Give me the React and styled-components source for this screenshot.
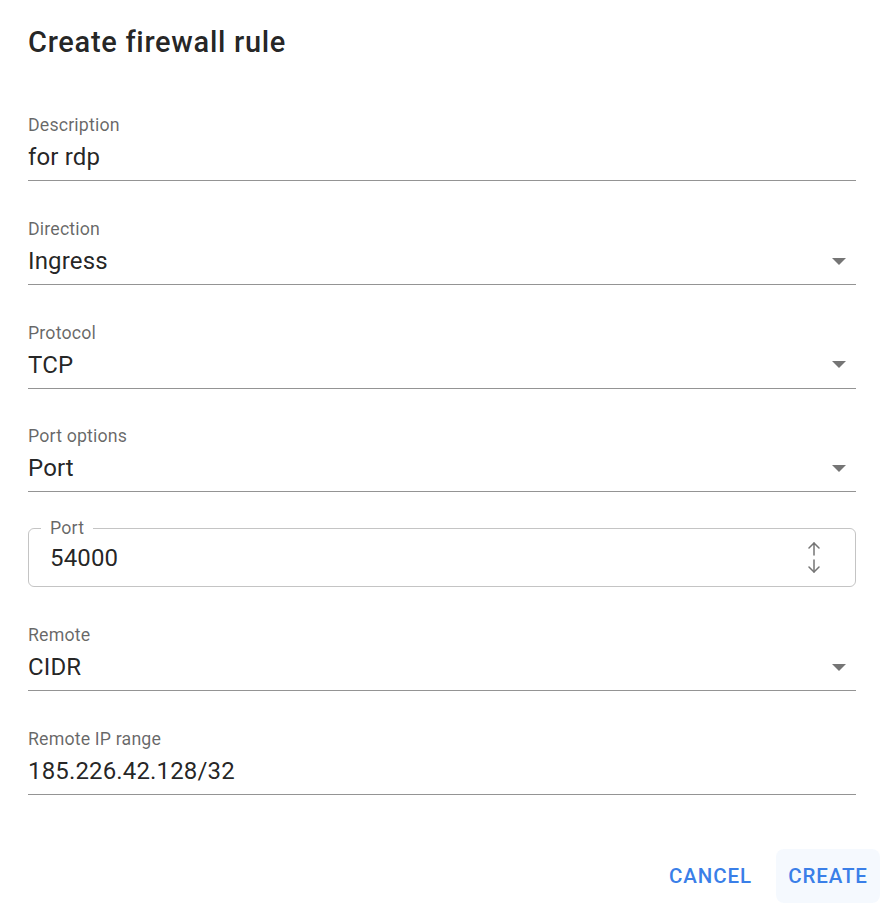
import styled, { createGlobalStyle } from "styled-components";

const Global = createGlobalStyle`
  body {
    margin: 0;
    background: #fff;
    font-family: Roboto, "Liberation Sans", sans-serif;
    color: rgba(0, 0, 0, 0.87);
  }
`;

const Dialog = styled.div`
  width: 880px;
  height: 910px;
  box-sizing: border-box;
  padding: 24px 0 0 28px;
  display: flex;
  flex-direction: column;
`;

const Title = styled.h2`
  margin: 0;
  font-size: 29px;
  font-weight: 500;
  line-height: 36px;
  letter-spacing: 0.7px;
`;

const Form = styled.div`
  width: 828px;
  display: flex;
  flex-direction: column;
  padding-top: 55px;
`;

const Field = styled.div`
  display: flex;
  flex-direction: column;
  margin-top: ${(p) => p.gap || 0}px;
  border-bottom: 1px solid rgba(0, 0, 0, 0.42);
  padding-bottom: 8px;
`;

const Label = styled.label`
  font-size: 17.8px;
  line-height: 20px;
  color: rgba(0, 0, 0, 0.6);
  letter-spacing: 0.15px;
`;

const ValueRow = styled.div`
  margin-top: 7px;
  height: 30px;
  display: flex;
  align-items: center;
  justify-content: space-between;
`;

const Value = styled.span`
  font-size: 24px;
  line-height: 30px;
  letter-spacing: 0.15px;
`;

const Caret = styled.span`
  width: 0;
  height: 0;
  margin-right: 10px;
  border-left: 7.5px solid transparent;
  border-right: 7.5px solid transparent;
  border-top: 7px solid rgba(0, 0, 0, 0.54);
`;

const Outlined = styled.div`
  position: relative;
  margin-top: 36px;
  height: 59px;
  box-sizing: border-box;
  border: 1px solid rgba(0, 0, 0, 0.23);
  border-radius: 6px;
  padding: 0 34px 0 21px;
  display: flex;
  align-items: center;
  justify-content: space-between;
`;

const Legend = styled.span`
  position: absolute;
  top: -11px;
  left: 12px;
  padding: 0 9px;
  background: #fff;
  font-size: 17.8px;
  line-height: 20px;
  color: rgba(0, 0, 0, 0.6);
  letter-spacing: 0.15px;
`;

const Spinner = styled.div`
  display: flex;
  flex-direction: column;
  gap: 3px;
  color: #757575;
`;

const Actions = styled.div`
  margin-top: auto;
  margin-bottom: 7px;
  display: flex;
  justify-content: flex-end;
  gap: 12px;
`;

const Button = styled.button`
  border: none;
  background: ${(p) => (p.focus ? "rgba(56, 128, 236, 0.05)" : "transparent")};
  border-radius: 8px;
  height: 54px;
  padding: 0 12px;
  min-width: 104px;
  font-family: Roboto, "Liberation Sans", sans-serif;
  font-size: 20.5px;
  font-weight: 500;
  letter-spacing: 0.9px;
  color: #3a7fe8;
  cursor: pointer;
`;

const Arrow = ({ down }) => (
  <svg width="14" height="14" viewBox="0 0 14 14" fill="none" stroke="currentColor" strokeWidth="1.5" strokeLinecap="round" strokeLinejoin="round">
    {down ? (
      <>
        <path d="M7 1v12" />
        <path d="M2 8l5 5 5-5" />
      </>
    ) : (
      <>
        <path d="M7 13V1" />
        <path d="M2 6l5-5 5 5" />
      </>
    )}
  </svg>
);

const TextLine = ({ label, value, select, gap }) => (
  <Field gap={gap}>
    <Label>{label}</Label>
    <ValueRow>
      <Value>{value}</Value>
      {select && <Caret />}
    </ValueRow>
  </Field>
);

const App = () => {
  return (
    <>
      <Global />
      <Dialog>
        <Title>Create firewall rule</Title>
        <Form>
          <TextLine label="Description" value="for rdp" />
          <TextLine label="Direction" value="Ingress" select gap={38} />
          <TextLine label="Protocol" value="TCP" select gap={37.5} />
          <TextLine label="Port options" value="Port" select gap={37.5} />
          <Outlined>
            <Legend>Port</Legend>
            <Value>54000</Value>
            <Spinner>
              <Arrow />
              <Arrow down />
            </Spinner>
          </Outlined>
          <TextLine label="Remote" value="CIDR" select gap={38} />
          <TextLine label="Remote IP range" value="185.226.42.128/32" gap={37.5} />
        </Form>
        <Actions>
          <Button>CANCEL</Button>
          <Button focus>CREATE</Button>
        </Actions>
      </Dialog>
    </>
  );
};

export default App;
